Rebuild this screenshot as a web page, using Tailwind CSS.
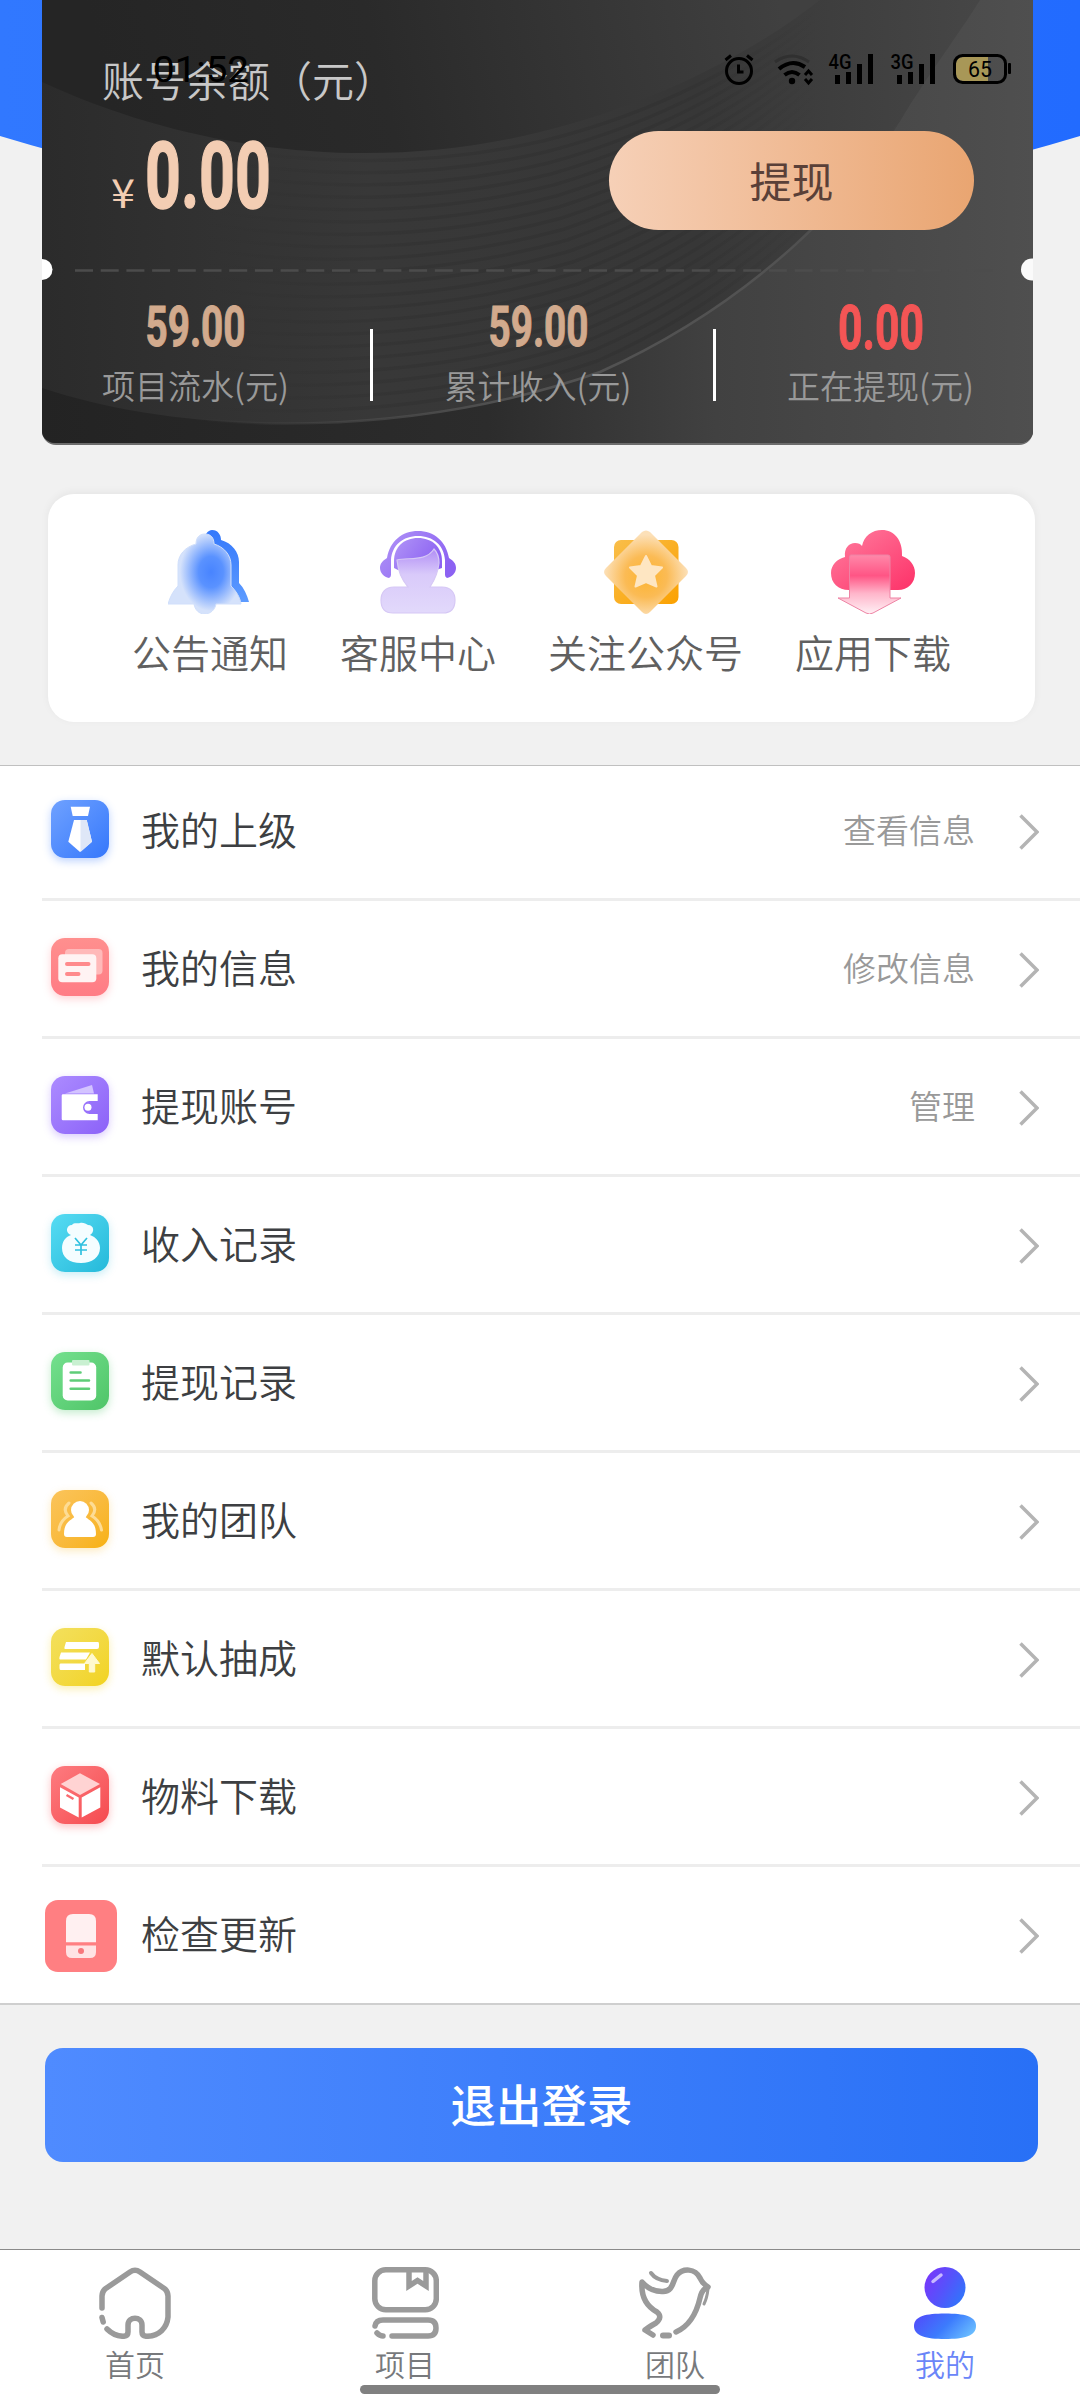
<!DOCTYPE html>
<html lang="zh-CN">
<head>
    <meta charset="UTF-8">
    <meta name="viewport" content="width=device-width, initial-scale=1.0">
    <title>我的</title>
    <script src="https://cdn.jsdelivr.net/npm/@tailwindcss/browser@4"></script>
    <style>
        body {
            font-family: 'Noto Sans CJK SC', sans-serif;
            font-weight: 350;
        }
    </style>
</head>
<body class="bg-[#f1f1f1]">
<div class="relative flex flex-col w-[1080px] h-[2400px] overflow-hidden bg-[#f1f1f1]">

    <!-- Blue curved header -->
    <svg class="absolute left-0 top-0 w-[1080px] h-[260px]" viewBox="0 0 1080 260">
        <defs>
            <linearGradient id="sky"><stop offset="0" stop-color="#3178ff"/><stop offset="1" stop-color="#226bff"/></linearGradient>
        </defs>
        <path d="M0 0H1080V136Q540 300 0 136Z" fill="url(#sky)"/>
    </svg>

    <!-- Balance card -->
    <section class="relative mx-[42px] w-[991px] h-[445px] shrink-0 overflow-hidden rounded-b-[14px] bg-[#2d2d2d] border-b-2 border-[#6c6c6c]">
        <svg class="absolute left-0 top-0 w-[991px] h-[445px]" viewBox="42 0 991 445">
            <defs>
                <linearGradient id="cardBase" x1="42" x2="1033" y1="0" y2="0" gradientUnits="userSpaceOnUse">
                    <stop offset="0" stop-color="#232323"/><stop offset=".45" stop-color="#2c2c2c"/><stop offset=".68" stop-color="#414141"/><stop offset="1" stop-color="#4f4f4f"/>
                </linearGradient>
                <linearGradient id="cardBand" x1="42" x2="980" y1="0" y2="0" gradientUnits="userSpaceOnUse">
                    <stop offset="0" stop-color="#2b2b2b"/><stop offset=".35" stop-color="#383838"/><stop offset=".7" stop-color="#373737"/><stop offset="1" stop-color="#464646"/>
                </linearGradient>
                <linearGradient id="cardTop" x1="120" x2="780" y1="150" y2="0" gradientUnits="userSpaceOnUse">
                    <stop offset="0" stop-color="#252525"/><stop offset=".4" stop-color="#2a2a2a"/><stop offset="1" stop-color="#404040"/>
                </linearGradient>
                <linearGradient id="edge" x1="200" x2="980" y1="0" y2="0" gradientUnits="userSpaceOnUse">
                    <stop offset="0" stop-color="#525252" stop-opacity="0"/><stop offset=".4" stop-color="#525252"/><stop offset=".75" stop-color="#525252"/><stop offset=".9" stop-color="#525252" stop-opacity="0"/>
                </linearGradient>
                <linearGradient id="ripple" x1="200" x2="820" y1="0" y2="0" gradientUnits="userSpaceOnUse">
                    <stop offset="0" stop-color="#2a2a2a" stop-opacity="0"/><stop offset=".35" stop-color="#2a2a2a" stop-opacity=".3"/><stop offset=".75" stop-color="#2a2a2a" stop-opacity=".3"/><stop offset="1" stop-color="#2a2a2a" stop-opacity="0"/>
                </linearGradient>
            </defs>
            <rect x="42" y="0" width="991" height="445" fill="url(#cardBase)"/>
            <path d="M42 388C200 440 420 435 600 372C760 300 860 190 905 113C935 65 965 25 980 0H42Z" fill="url(#cardBand)"/>
            <g id="ripples" fill="none" stroke="url(#ripple)" stroke-width="3.500"></g>
            <path d="M42 388C200 440 420 435 600 372C760 300 860 190 905 113C935 65 965 25 980 0" fill="none" stroke="url(#edge)" stroke-width="2.500"/>
            <path d="M42 82C200 155 380 172 540 132C650 105 750 55 820 0H42Z" fill="url(#cardTop)"/>
            <path d="M75 270.500H1000" stroke="#4c4c4c" stroke-width="2.500" stroke-dasharray="18 7.700"/>
            <circle cx="42" cy="269.500" r="10.500" fill="#fff"/>
            <circle cx="1032" cy="269.500" r="11" fill="#fafafa"/>
        </svg>

        <div class="relative flex flex-col h-full">
            <div class="h-[131px] pt-[58px] pl-[60px] text-[42px] leading-none text-[#c8c8c8]">账号余额（元）</div>
            <div class="flex justify-between pl-[60px] pr-[59px] h-[99px]">
                <svg class="w-[220px] h-[99px] overflow-visible" viewBox="0 0 220 99" fill="#f3cdb3">
                    <text x="9" y="77" font-size="40" font-family="Noto Sans CJK SC" font-weight="400" textLength="24" lengthAdjust="spacingAndGlyphs">¥</text>
                    <text x="43" y="76.500" font-size="92" font-family="Roboto" font-weight="700" stroke="#f3cdb3" stroke-width="1.500" textLength="126" lengthAdjust="spacingAndGlyphs">0.00</text>
                </svg>
                <button class="w-[365px] h-[99px] pb-[2px] rounded-full bg-linear-to-r from-[#f6d0b7] to-[#e9a571] text-[42px] leading-none font-normal text-[#5a4038]">提现</button>
            </div>
            <div class="flex justify-between pt-[68px] pl-[60px] pr-[59px]">
                <div class="flex flex-col items-center w-[187px] text-[33px] leading-none text-[#999] whitespace-nowrap">
                    <svg class="w-[187px] h-[71px] overflow-visible" viewBox="0 0 187 71"><text x="43.500" y="47.500" fill="#d2aa8d" stroke="#d2aa8d" font-size="55.500" font-family="Roboto" font-weight="700" textLength="100" lengthAdjust="spacingAndGlyphs">59.00</text></svg>
                    项目流水(元)
                </div>
                <div class="relative left-[5px] w-[3px] h-[72px] mt-[31px] bg-white"></div>
                <div class="flex flex-col items-center w-[187px] text-[33px] leading-none text-[#999] whitespace-nowrap">
                    <svg class="w-[187px] h-[71px] overflow-visible" viewBox="0 0 187 71"><text x="43.500" y="47.500" fill="#d2aa8d" stroke="#d2aa8d" font-size="55.500" font-family="Roboto" font-weight="700" textLength="100" lengthAdjust="spacingAndGlyphs">59.00</text></svg>
                    累计收入(元)
                </div>
                <div class="relative left-[5px] w-[3px] h-[72px] mt-[31px] bg-white"></div>
                <div class="flex flex-col items-center w-[187px] text-[33px] leading-none text-[#999] whitespace-nowrap">
                    <svg class="w-[187px] h-[71px] overflow-visible" viewBox="0 0 187 71"><text x="51" y="50.500" fill="#f45555" stroke="#f45555" font-size="62" font-family="Roboto" font-weight="700" textLength="86" lengthAdjust="spacingAndGlyphs">0.00</text></svg>
                    正在提现(元)
                </div>
            </div>
        </div>
    </section>

    <!-- System status bar, floats over the card -->
    <div class="absolute left-0 top-0 w-[1080px] h-[110px] text-black">
        <svg class="w-[1080px] h-[110px]" viewBox="0 0 1080 110">
            <text x="153" y="82" font-size="37" font-family="Roboto" font-weight="400" textLength="96" lengthAdjust="spacingAndGlyphs">01:52</text>
            <!-- alarm -->
            <g fill="none" stroke="#000" stroke-width="3">
                <circle cx="739" cy="71" r="12.500"/>
                <path d="M738.500 64.500V72H743.500M725.500 60L731 55.500M752.500 60L747 55.500"/>
            </g>
            <!-- wifi -->
            <g fill="none" stroke-width="4">
                <path d="M775 62Q792 50 809 62" stroke="#303030" stroke-width="3"/>
                <path d="M779 69Q792 58 805 67" stroke="#000"/>
                <path d="M784.500 75Q792 69 799.500 75" stroke="#000"/>
                <path d="M805 75L808.500 71L812 75M805 79L808.500 83L812 79" stroke="#000" stroke-width="3"/>
            </g>
            <circle cx="792" cy="81" r="3.200"/>
            <!-- signals -->
            <text x="828.500" y="69" font-size="20" font-family="Roboto" font-weight="500" textLength="23" lengthAdjust="spacingAndGlyphs">4G</text>
            <path d="M837.500 75V84M848.500 72V84M859.500 64V84M870.500 54V84" stroke="#000" stroke-width="5"/>
            <text x="890.500" y="69" font-size="20" font-family="Roboto" font-weight="500" textLength="23" lengthAdjust="spacingAndGlyphs">3G</text>
            <path d="M899.500 75V84M910.500 72V84M921.500 64V84M932.500 54V84" stroke="#000" stroke-width="5"/>
            <!-- battery -->
            <path d="M988 57H964Q956 57 956 65V73Q956 81 964 81H988Z" fill="#a89757"/>
            <rect x="954.500" y="55.500" width="51" height="27" rx="8" fill="none" stroke="#000" stroke-width="3"/>
            <rect x="1008" y="63" width="3" height="11" rx="1"/>
            <text x="968" y="77" font-size="22" font-family="Roboto" font-weight="400" textLength="24" lengthAdjust="spacingAndGlyphs">65</text>
        </svg>
    </div>

    <!-- Shortcuts -->
    <section class="relative flex justify-center gap-[52px] mt-[49px] ml-[48px] w-[987px] h-[228px] shrink-0 pt-[36px] rounded-[26px] bg-white text-[39px] leading-none text-[#606060] shadow-[0_-2px_8px_rgba(0,0,0,0.05)]">
        <div class="flex flex-col items-center gap-[18px]">
            <svg class="w-[84px] h-[84px]" viewBox="0 0 84 84">
                <defs>
                    <linearGradient id="bellBack" x1="0" y1="0" x2="0" y2="1"><stop offset="0" stop-color="#3478fb"/><stop offset="1" stop-color="#5d9bff"/></linearGradient>
                    <radialGradient id="bellGlow" cx="0" cy="0" r="1" gradientUnits="userSpaceOnUse" gradientTransform="translate(43 42) scale(31 39)"><stop offset="0" stop-color="#4884ff"/><stop offset=".4" stop-color="#5a92ff"/><stop offset="1" stop-color="#d5e2fb"/></radialGradient>
                </defs>
                <path d="M44 0C50 0 53 5 53 10C64 13 71 22 71 32V53C76 58 79 65 81 72H50L30 40L38 4C40 1 42 0 44 0Z" fill="url(#bellBack)"/>
                <path d="M37 4C43 4 46 8 46 14C56 17 63 25 63 35V56C68 61 72 67 73 74H48C47 80 42 84 37 84C31 84 27 80 26 74H0C2 67 5 61 10 56V35C10 25 17 17 28 14C28 8 31 4 37 4Z" fill="url(#bellGlow)" stroke="#d0dffb" stroke-width="1"/>
            </svg>
            公告通知
        </div>
        <div class="flex flex-col items-center gap-[18px]">
            <svg class="w-[84px] h-[84px]" viewBox="0 0 84 84">
                <defs>
                    <linearGradient id="phones" x1="0" y1="0" x2="1" y2=".5"><stop offset="0" stop-color="#b195f7"/><stop offset="1" stop-color="#8c62f2"/></linearGradient>
                    <linearGradient id="face" x1="0" y1="0" x2="0" y2="1"><stop offset=".05" stop-color="#b695f6"/><stop offset=".4" stop-color="#d9cafa"/><stop offset="1" stop-color="#e2d9fb"/></linearGradient>
                </defs>
                <path d="M11 28C14 11 26 1 42 1C58 1 70 11 73 28C78 31 80 34 80 38C80 43 76 47 71 48Q69 47 69 45V30C68 15 57 6 42 6C27 6 16 15 15 30V45Q15 47 13 48C8 47 4 43 4 38C4 34 6 31 11 28Z" fill="url(#phones)"/>
                <path d="M18 38V31C18 17 28 8 42 8C56 8 66 17 66 31V38L60 40H22Z" fill="url(#phones)"/>
                <path d="M21 30C32 27 50 32 58 19Q63 24 63 33C62 43 58 51 54 57H66C75 57 79 63 79 70C79 79 74 83 67 83H17C9 83 5 79 5 70C5 63 9 57 18 57H32C26 50 22 42 21 30Z" fill="url(#face)" stroke="#d6c8f5" stroke-width="1.200"/>
            </svg>
            客服中心
        </div>
        <div class="flex flex-col items-center gap-[18px]">
            <svg class="w-[84px] h-[84px]" viewBox="0 0 84 84">
                <defs>
                    <linearGradient id="sq" x1="0" y1="0" x2="1" y2="1"><stop offset="0" stop-color="#f9be4a"/><stop offset="1" stop-color="#fba100"/></linearGradient>
                    <radialGradient id="dia" cx=".5" cy=".55" r=".5"><stop offset="0" stop-color="#fdb42d"/><stop offset=".5" stop-color="#fbbb55"/><stop offset="1" stop-color="#fce0b8"/></radialGradient>
                </defs>
                <rect x="10" y="10" width="64.500" height="64" rx="7" fill="url(#sq)"/>
                <path d="M38 2Q42 -1 46 2L82 38Q86 42 82 46L46 82Q42 86 38 82L2 46Q-2 42 2 38Z" fill="url(#dia)"/>
                <path d="M42 26L47 36L58 37.500L50 45.500L52.500 56.500L42 52L31.500 56.500L34 45.500L26 37.500L37 36Z" fill="#fee6c2" stroke="#fee6c2" stroke-width="2" stroke-linejoin="round"/>
            </svg>
            关注公众号
        </div>
        <div class="flex flex-col items-center gap-[18px]">
            <svg class="w-[84px] h-[84px]" viewBox="0 0 84 84">
                <defs>
                    <linearGradient id="cloud" x1="0" y1="0" x2="1" y2="1"><stop offset="0" stop-color="#ff7fa0"/><stop offset="1" stop-color="#fd3168"/></linearGradient>
                    <linearGradient id="arrow" x1="0" y1="0" x2="0" y2="1"><stop offset="0" stop-color="#ff88a9"/><stop offset=".35" stop-color="#ff5585"/><stop offset=".65" stop-color="#ffb5ca"/><stop offset="1" stop-color="#fff0f5"/></linearGradient>
                </defs>
                <path d="M18 60C7 60 0 53 0 43C0 35 6 29 14 27C13 18 18 13 24 13Q29 13 31 16C33 6 41 0 51 0C63 0 72 10 71 26C79 29 84 35 84 43C84 53 77 60 67 60Z" fill="url(#cloud)"/>
                <path d="M20 25H57Q59 25 59 27V68H70L42 83Q38.500 85 35 83L7 68H18.500V27Q18.500 25 20 25Z" fill="url(#arrow)" stroke="#ee83a4" stroke-width="1"/>
            </svg>
            应用下载
        </div>
    </section>

    <!-- Menu -->
    <section class="mt-[43px] shrink-0 h-[1240px] bg-white border-t border-[#c0c0c0] text-[39px] leading-none text-[#3d3f42]">
        <div class="flex items-center ml-[42px] h-[135px] pb-[6px] pl-[9px] pr-[41px] border-b-3 border-[#ededed]">
            <svg class="w-[58px] h-[58px] rounded-[14px] bg-linear-to-br from-[#6fa1ff] to-[#3577fb] shadow-[0_3px_8px_#3577fb55]" viewBox="0 0 58 58">
                <path d="M19.700 6.700H39L37 16H21.700Z" fill="#fff"/>
                <path d="M23 20H35.700L41 41.700L29 52L17.300 41.700Z" fill="#fff"/>
                <path d="M29.500 20H35.700L41 41.700L29.500 52Z" fill="#dfe7f7"/>
            </svg>
            <span class="ml-[32px] pb-[2px]">我的上级</span>
            <span class="ml-auto mr-[44px] text-[33px] text-[#999]">查看信息</span>
            <svg class="mt-[5px] w-[20px] h-[36px]" viewBox="0 0 20 36" fill="none" stroke="#b4b4b4" stroke-width="3.500"><path d="M1.500 1.500L18 18L1.500 34.500"/></svg>
        </div>
        <div class="flex items-center ml-[42px] h-[138px] pb-[3px] pl-[9px] pr-[41px] border-b-3 border-[#ededed]">
            <svg class="w-[58px] h-[58px] rounded-[14px] bg-linear-to-b from-[#ff8f8e] to-[#ff7c85] shadow-[0_3px_8px_#ff7c8555]" viewBox="0 0 58 58">
                <rect x="14" y="11" width="37.500" height="25.500" rx="4" fill="#ffb9b9"/>
                <rect x="7.300" y="16.300" width="38" height="28" rx="4" fill="#fff3f3"/>
                <path d="M16 26H37.500M16 36H27.500" stroke="#ff8a8c" stroke-width="4" stroke-linecap="round"/>
            </svg>
            <span class="ml-[32px] pb-[2px]">我的信息</span>
            <span class="ml-auto mr-[44px] text-[33px] text-[#999]">修改信息</span>
            <svg class="mt-[5px] w-[20px] h-[36px]" viewBox="0 0 20 36" fill="none" stroke="#b4b4b4" stroke-width="3.500"><path d="M1.500 1.500L18 18L1.500 34.500"/></svg>
        </div>
        <div class="flex items-center ml-[42px] h-[138px] pb-[3px] pl-[9px] pr-[41px] border-b-3 border-[#ededed]">
            <svg class="w-[58px] h-[58px] rounded-[14px] bg-linear-to-br from-[#ac8bff] to-[#8c61f8] shadow-[0_3px_8px_#8c61f855]" viewBox="0 0 58 58">
                <path d="M14 17.500L41 9L43 17.500Z" fill="#d3c3ff"/>
                <path d="M12 18.300H46.700V25H38.500A6 6 0 0 0 38.500 38H46.700V44.300H12Q10.700 44.300 10.700 43V19.600Q10.700 18.300 12 18.300Z" fill="#fff"/>
                <circle cx="37" cy="31.300" r="3.500" fill="#fff"/>
            </svg>
            <span class="ml-[32px] pb-[2px]">提现账号</span>
            <span class="ml-auto mr-[44px] text-[33px] text-[#999]">管理</span>
            <svg class="mt-[5px] w-[20px] h-[36px]" viewBox="0 0 20 36" fill="none" stroke="#b4b4b4" stroke-width="3.500"><path d="M1.500 1.500L18 18L1.500 34.500"/></svg>
        </div>
        <div class="flex items-center ml-[42px] h-[138px] pb-[3px] pl-[9px] pr-[41px] border-b-3 border-[#ededed]">
            <svg class="w-[58px] h-[58px] rounded-[14px] bg-linear-to-br from-[#55dcf3] to-[#22b9da] shadow-[0_3px_8px_#22b9da40]" viewBox="0 0 58 58">
                <path d="M20 21C14 19 15 11 21 11C23 8 27 10 29 9C32 8 35 10 37 11C43 11 44 18 39 21C45 23 49 28 49 34C49 43 41 49 30 49C18 49 11 43 11 34C11 28 14 23 20 21Z" fill="#f4fdff"/>
                <path d="M24 24L30 31L36 24M30 31V41M24 31H36M24 36H36" stroke="#2fc0df" stroke-width="1.700" fill="none"/>
            </svg>
            <span class="ml-[32px] pb-[2px]">收入记录</span>
            <svg class="mt-[5px] ml-auto w-[20px] h-[36px]" viewBox="0 0 20 36" fill="none" stroke="#b4b4b4" stroke-width="3.500"><path d="M1.500 1.500L18 18L1.500 34.500"/></svg>
        </div>
        <div class="flex items-center ml-[42px] h-[138px] pb-[3px] pl-[9px] pr-[41px] border-b-3 border-[#ededed]">
            <svg class="w-[58px] h-[58px] rounded-[14px] bg-linear-to-br from-[#74e08e] to-[#4fc568] shadow-[0_3px_8px_#4fc56855]" viewBox="0 0 58 58">
                <rect x="11.700" y="10.500" width="33.500" height="38" rx="5" fill="#fff"/>
                <rect x="21" y="8" width="17.500" height="5.500" rx="1" fill="#c9f0d1"/>
                <path d="M19.700 20.500H29.500M19.700 28.500H38M19.700 36.700H38" stroke="#5fcd78" stroke-width="2.600" stroke-linecap="round"/>
            </svg>
            <span class="ml-[32px] pb-[2px]">提现记录</span>
            <svg class="mt-[5px] ml-auto w-[20px] h-[36px]" viewBox="0 0 20 36" fill="none" stroke="#b4b4b4" stroke-width="3.500"><path d="M1.500 1.500L18 18L1.500 34.500"/></svg>
        </div>
        <div class="flex items-center ml-[42px] h-[138px] pb-[3px] pl-[9px] pr-[41px] border-b-3 border-[#ededed]">
            <svg class="w-[58px] h-[58px] rounded-[14px] bg-linear-to-br from-[#fbc45a] to-[#f7b10c] shadow-[0_3px_8px_#f7b10c40]" viewBox="0 0 58 58">
                <path d="M18 13Q11 19 17 26Q9 31 8 40M40 13Q47 19 41 26Q49 31 50.500 40" stroke="#fddc95" stroke-width="3" fill="none" stroke-linecap="round"/>
                <circle cx="29" cy="20" r="9" fill="#fff"/>
                <path d="M24 25H34C34 30 45 29 45 44Q45 47 42 47H16Q13 47 13 44C13 29 24 30 24 25Z" fill="#fff"/>
            </svg>
            <span class="ml-[32px] pb-[2px]">我的团队</span>
            <svg class="mt-[5px] ml-auto w-[20px] h-[36px]" viewBox="0 0 20 36" fill="none" stroke="#b4b4b4" stroke-width="3.500"><path d="M1.500 1.500L18 18L1.500 34.500"/></svg>
        </div>
        <div class="flex items-center ml-[42px] h-[138px] pb-[3px] pl-[9px] pr-[41px] border-b-3 border-[#ededed]">
            <svg class="w-[58px] h-[58px] rounded-[14px] bg-linear-to-br from-[#f3e05c] to-[#f2d31c] shadow-[0_3px_8px_#f2d31c55]" viewBox="0 0 58 58">
                <path d="M15 14H47Q48 14 48 16V19Q48 21 46 21H14Q13 21 13.500 19ZM10 24.500H39L35 31.500H9Q8 31.500 8.500 29ZM9.500 35.500H34V42H9.500Q8.500 42 8.500 40V37Q8.500 35.500 9.500 35.500Z" fill="#fff"/>
                <path d="M41 25.500L48.500 35.500H43.700V44H38.300V35.500H33.500Z" fill="#fff9cf" stroke="#fff9cf" stroke-linejoin="round"/>
            </svg>
            <span class="ml-[32px] pb-[2px]">默认抽成</span>
            <svg class="mt-[5px] ml-auto w-[20px] h-[36px]" viewBox="0 0 20 36" fill="none" stroke="#b4b4b4" stroke-width="3.500"><path d="M1.500 1.500L18 18L1.500 34.500"/></svg>
        </div>
        <div class="flex items-center ml-[42px] h-[138px] pb-[3px] pl-[9px] pr-[41px] border-b-3 border-[#ededed]">
            <svg class="w-[58px] h-[58px] rounded-[14px] bg-linear-to-br from-[#fd7b80] to-[#f5494f] shadow-[0_3px_8px_#f5494f55]" viewBox="0 0 58 58">
                <path d="M29 7.300L49 18L29 29L9.700 18Z" fill="#ffd3d3"/>
                <path d="M9 21.300L27.700 31.500V51.500L9 41.500ZM49.300 21.300L30.700 31.500V51.500L49.300 41.500Z" fill="#fff"/>
                <path d="M15.500 29L22.500 33" stroke="#f96a6f" stroke-width="2.500"/>
            </svg>
            <span class="ml-[32px] pb-[2px]">物料下载</span>
            <svg class="mt-[5px] ml-auto w-[20px] h-[36px]" viewBox="0 0 20 36" fill="none" stroke="#b4b4b4" stroke-width="3.500"><path d="M1.500 1.500L18 18L1.500 34.500"/></svg>
        </div>
        <div class="flex items-center h-[138px] pb-[4px] pl-[45px] pr-[41px] border-b-2 border-[#cfcfcf]">
            <svg class="mt-[5px] w-[72px] h-[72px] rounded-[13px] bg-[#ff7f82]" viewBox="0 0 72 72">
                <path d="M28 14H44Q51 14 51 21V42.300H21V21Q21 14 28 14Z" fill="#fff0f1"/>
                <path d="M21 45.500H51V52Q51 58 45 58H27Q21 58 21 52Z" fill="#ffe3e4"/>
                <circle cx="36" cy="51" r="3" fill="#f8777c"/>
            </svg>
            <span class="ml-[24px] pb-[2px]">检查更新</span>
            <svg class="mt-[5px] ml-auto w-[20px] h-[36px]" viewBox="0 0 20 36" fill="none" stroke="#b4b4b4" stroke-width="3.500"><path d="M1.500 1.500L18 18L1.500 34.500"/></svg>
        </div>
    </section>

    <button class="mt-[43px] ml-[45px] w-[993px] h-[114px] shrink-0 pb-[2px] rounded-[18px] bg-linear-to-r from-[#4f8bff] to-[#2870f6] text-[45.500px] leading-none font-medium text-white">退出登录</button>

    <!-- Tab bar -->
    <nav class="relative mt-auto grid grid-cols-4 h-[151px] shrink-0 bg-white border-t border-[#8a8a8a] pt-[17px] text-[30px] leading-none text-[#77797c]">
        <div class="flex flex-col items-center gap-[9px]">
            <svg class="w-[72px] h-[72px]" viewBox="0 0 72 72" fill="none" stroke="#9a9a9a" stroke-width="5.500" stroke-linecap="round" stroke-linejoin="round">
                <path d="M3 41V29Q3 25 6 22L31 5Q36 1.500 41 5L66 22Q69 25 69 29V50C68 61 60 69 48 69.300Q43 69.300 43 65V58C43 49 29 49 29 58V65Q29 69.300 24 69.300Q15 69 8 62M3 50.500L4.200 55"/>
            </svg>
            首页
        </div>
        <div class="flex flex-col items-center gap-[9px]">
            <svg class="w-[67px] h-[72px]" viewBox="0 0 67 72" fill="none" stroke="#9a9a9a" stroke-width="5.500" stroke-linecap="round">
                <rect x="2.800" y="2.800" width="61.500" height="40" rx="11"/>
                <path d="M37 4V19L45.500 13.500L54 19V4" stroke-linecap="butt"/>
                <path d="M3 59Q4 53 11 53H56Q64 53 64 61Q64 69 56 69H20M5 66Q8 69 11 69"/>
            </svg>
            项目
        </div>
        <div class="flex flex-col items-center gap-[9px]">
            <svg class="w-[72px] h-[72px]" viewBox="0 0 72 72" fill="none" stroke="#9a9a9a" stroke-width="5.500" stroke-linecap="round" stroke-linejoin="round">
                <path d="M14 68L6 63Q13 58 17 56Q24 50 18 45C7 39 2 28 3 15Q12 25 24 24.500C35 24 33 14 38 8C44 1 56 1 61 11Q63 16 69 20Q63 22 61 31Q55 57 37 65"/>
                <path d="M24 68.500H30" stroke-width="6"/>
                <path d="M12 6Q17 13 28 14" stroke-width="4"/>
                <path d="M69 22Q68 31 65 37" stroke-width="3"/>
            </svg>
            团队
        </div>
        <div class="flex flex-col items-center gap-[9px] text-[#6a86f8]">
            <svg class="w-[62px] h-[72px]" viewBox="0 0 62 72">
                <defs>
                    <linearGradient id="ball" x1="0" y1=".2" x2="1" y2=".8"><stop offset="0" stop-color="#7a35fb"/><stop offset=".5" stop-color="#5553fb"/><stop offset="1" stop-color="#2d78fb"/></linearGradient>
                    <linearGradient id="bust" x1="0" y1=".3" x2="1" y2=".7"><stop offset="0" stop-color="#4f50fb"/><stop offset=".5" stop-color="#3c7bfd"/><stop offset="1" stop-color="#6bbfff"/></linearGradient>
                </defs>
                <circle cx="31" cy="20.500" r="20.500" fill="url(#ball)"/>
                <path d="M19 14.500L27 8" stroke="#c7b8ff" stroke-width="3.500" stroke-linecap="round"/>
                <path d="M31 46.500C50 46.500 62 49 62 59C62 69 50 72 31 72C12 72 0 69 0 59C0 49 12 46.500 31 46.500Z" fill="url(#bust)"/>
            </svg>
            我的
        </div>
        <div class="absolute left-[360px] bottom-[6px] w-[360px] h-[9px] rounded-full bg-[#808080]"></div>
    </nav>
</div>

<script>
    // Fine ripple lines, spread evenly between the upper and lower arcs of the card
    const upper = [42, 82, 200, 150, 380, 165, 540, 130, 650, 105, 750, 55, 820, 0];
    const lower = [42, 388, 200, 440, 420, 435, 600, 372, 760, 300, 860, 190, 905, 113];
    const ripples = document.getElementById('ripples');
    for (let i = 1; i < 22; i++) {
        const p = upper.map((v, k) => v + (lower[k] - v) * i / 22);
        const path = document.createElementNS('http://www.w3.org/2000/svg', 'path');
        path.setAttribute('d', `M${p[0]} ${p[1]}C${p.slice(2, 8).join(' ')}C${p.slice(8).join(' ')}`);
        ripples.appendChild(path);
    }
</script>
</body>
</html>
